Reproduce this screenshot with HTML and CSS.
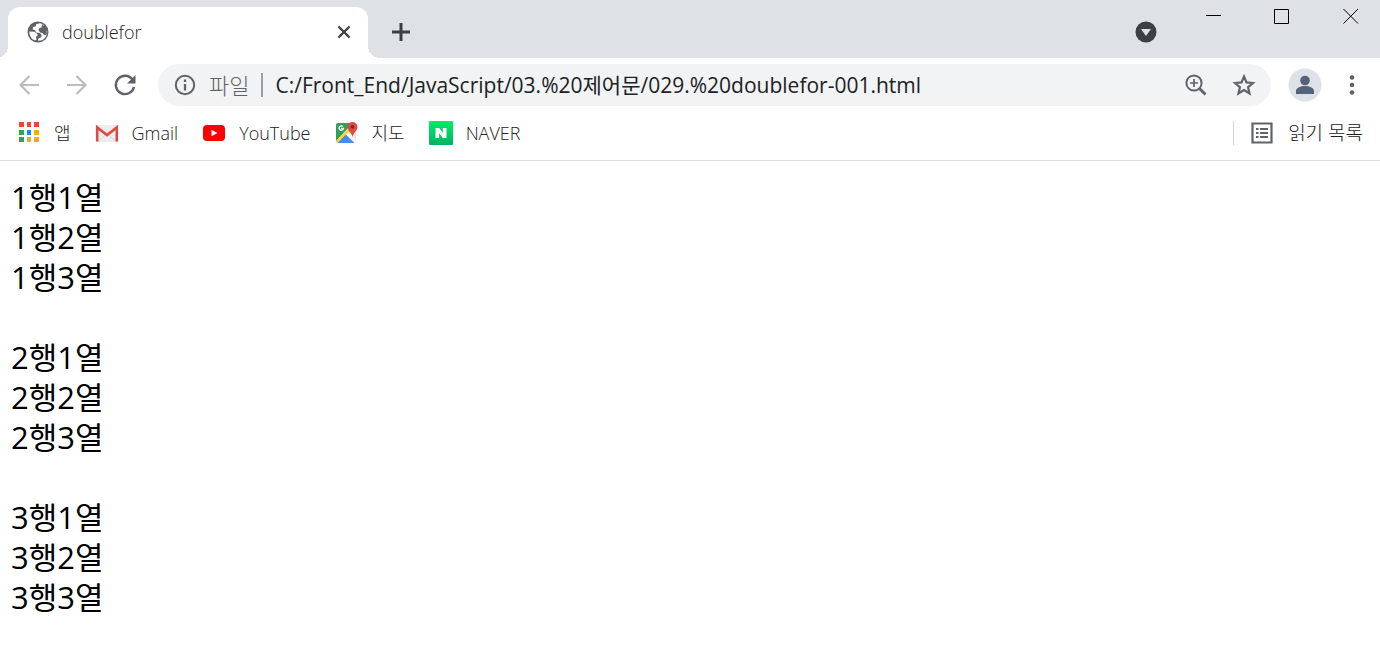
FILE: index.html
```html
<!DOCTYPE html>
<html lang="ko">
<head>
    <meta charset="UTF-8">
    <meta name="viewport" content="width=device-width, initial-scale=1.0">
    <title>doublefor</title>
    <link rel="stylesheet" href="styles.css">
</head>
<body>
    <header class="browser">
        <div class="tab-strip">
            <div class="tab">
                <svg width="24" height="24" viewBox="0 0 24 24">
                    <circle cx="12" cy="12" r="10.500" fill="#5f6368"/>
                    <path fill="#fff" d="M13.500 3.300c2 .3 3.500 1 4.800 2.200l-1.500 1.300-.3 2.200 1.800 1.500 2.900.5c.2 4-1.800 7.500-5.200 9.200l-4 .6.500-2.600 2.500-.8.700-2.500-1.900-2-3.800-.4-1-2.500-2.300-.5.300-2.400 2.600-.6.600-2.200z"/>
                    <path fill="#5f6368" d="M16 4l4 4 1 6-2.500 1.500-2-2.500-2.500-.5-1.500-2.500 1-2 2-.5z"/>
                    <path fill="#fff" d="M3.300 11.500l5 .3 2.500 1.700 1 1.800-1.800 1.700.5 3-2 .3c-3-1.500-5.200-4.600-5.200-8.800z"/>
                </svg>
                <span class="tab-title">doublefor</span>
                <button class="icon-btn" type="button" aria-label="탭 닫기">
                    <svg width="24" height="24" viewBox="0 0 24 24"><path d="M6.500 6.500l11 11M17.500 6.500l-11 11" stroke="#3c4043" stroke-width="2.400"/></svg>
                </button>
            </div>
            <button class="icon-btn new-tab" type="button" aria-label="새 탭">
                <svg width="24" height="24" viewBox="0 0 24 24"><path d="M12 3v18M3 12h18" stroke="#3c4043" stroke-width="3"/></svg>
            </button>
            <button class="icon-btn tab-search" type="button" aria-label="탭 검색">
                <svg width="24" height="24" viewBox="0 0 24 24"><circle cx="12" cy="12" r="10.500" fill="#3c4043"/><path d="M7 9h10l-5 7z" fill="#dee1e6"/></svg>
            </button>
            <div class="window-buttons">
                <button class="icon-btn" type="button" aria-label="최소화">
                    <svg width="16" height="16" viewBox="0 0 16 16"><path d="M1 7.500h15" stroke="#000"/></svg>
                </button>
                <button class="icon-btn" type="button" aria-label="최대화">
                    <svg width="16" height="16" viewBox="0 0 16 16"><path d="M.5 1.500h14v14H.5z" fill="none" stroke="#000"/></svg>
                </button>
                <button class="icon-btn" type="button" aria-label="닫기">
                    <svg width="16" height="16" viewBox="0 0 16 16"><path d="M.5 1l14.500 14.500M15 1L.5 15.500" stroke="#000"/></svg>
                </button>
            </div>
        </div>

        <div class="toolbar">
            <button class="icon-btn" type="button" aria-label="뒤로">
                <svg width="24" height="24" viewBox="0 0 24 24"><path d="M22 12H4M12.500 3L3.500 12l9 9" fill="none" stroke="#babcbe" stroke-width="2.200"/></svg>
            </button>
            <button class="icon-btn" type="button" aria-label="앞으로">
                <svg width="24" height="24" viewBox="0 0 24 24"><path d="M2 12h18M11.500 3l9 9-9 9" fill="none" stroke="#babcbe" stroke-width="2.200"/></svg>
            </button>
            <button class="icon-btn" type="button" aria-label="새로고침">
                <svg width="24" height="24" viewBox="0 0 24 24"><path d="M19.500 6.500A9.200 9.200 0 1 0 21 14" fill="none" stroke="#5f6368" stroke-width="2.400"/><path d="M22.500 2v8.500H14z" fill="#5f6368"/></svg>
            </button>
            <div class="omnibox">
                <svg width="24" height="24" viewBox="0 0 24 24"><circle cx="12" cy="12" r="9.200" fill="none" stroke="#5f6368" stroke-width="2"/><path d="M12 6.500v2.500M12 11v6.500" stroke="#5f6368" stroke-width="2.300"/></svg>
                <label class="scheme" for="address">파일</label>
                <input class="address" id="address" type="text" spellcheck="false" value="C:/Front_End/JavaScript/03.%20제어문/029.%20doublefor-001.html">
                <button class="icon-btn" type="button" aria-label="확대/축소">
                    <svg width="24" height="24" viewBox="0 0 24 24"><circle cx="10" cy="10" r="7.600" fill="none" stroke="#5f6368" stroke-width="2"/><path d="M6 10h8M10 6v8" stroke="#5f6368" stroke-width="1.700"/><path d="M15 15l6.500 6.500" stroke="#5f6368" stroke-width="2.800"/></svg>
                </button>
                <button class="icon-btn" type="button" aria-label="북마크에 추가">
                    <svg width="24" height="24" viewBox="0 0 24 24"><path d="M12 3.500l2.500 5.900 6.400.6-4.800 4.200 1.400 6.200-5.500-3.300-5.500 3.300 1.400-6.200L3.100 10l6.400-.6z" fill="none" stroke="#5f6368" stroke-width="2.200"/></svg>
                </button>
            </div>
            <button class="icon-btn profile" type="button" aria-label="프로필">
                <svg width="34" height="34" viewBox="0 0 34 34"><circle cx="17" cy="17" r="16.500" fill="#dee1e6"/><circle cx="17" cy="12.500" r="4.800" fill="#56617a"/><path d="M8 26v-3c0-3.500 5-5 9-5s9 1.500 9 5v3z" fill="#56617a"/></svg>
            </button>
            <button class="icon-btn" type="button" aria-label="메뉴">
                <svg width="24" height="24" viewBox="0 0 24 24" fill="#5f6368"><circle cx="12" cy="4.500" r="2.300"/><circle cx="12" cy="12" r="2.300"/><circle cx="12" cy="19.500" r="2.300"/></svg>
            </button>
        </div>

        <nav class="bookmarks">
            <a class="bookmark" href="#">
                <svg width="24" height="24" viewBox="0 0 24 24">
                    <path fill="#f44336" d="M2 1h5v5H2zM10 1h4v5h-4zM17 1h5v5h-5z"/>
                    <path fill="#34a058" d="M2 9h5v5H2zM2 16h5v5H2z"/>
                    <path fill="#1e88f0" d="M10 9h4v5h-4z"/>
                    <path fill="#fbab05" d="M17 9h5v5h-5zM10 16h4v5h-4zM17 16h5v5h-5z"/>
                </svg>
                <span>앱</span>
            </a>
            <a class="bookmark" href="#">
                <svg width="24" height="24" viewBox="0 0 24 24">
                    <rect x="1" y="4" width="22" height="17" rx="1" fill="#ececec"/>
                    <path d="M4 20l8-8 8 8" fill="none" stroke="#d6d6d6"/>
                    <path d="M2.200 20.500V6.500L12 14l9.800-7.500v14" fill="none" stroke="#db4b3f" stroke-width="2.600"/>
                </svg>
                <span>Gmail</span>
            </a>
            <a class="bookmark" href="#">
                <svg width="24" height="24" viewBox="0 0 24 24"><rect x="1" y="4" width="22" height="16" rx="4" fill="#f00"/><path d="M9.500 8.800l6 3.200-6 3.200z" fill="#fff"/></svg>
                <span>YouTube</span>
            </a>
            <a class="bookmark" href="#">
                <svg width="24" height="24" viewBox="0 0 24 24">
                    <rect x="1" y="2" width="20" height="20" rx="2" fill="#e4e4e4"/>
                    <path d="M3 2h15L1 20V4a2 2 0 0 1 2-2z" fill="#2f9e5b"/>
                    <path d="M1 20L16 4l4 5L4 22H2z" fill="#fdd33f"/>
                    <path d="M2.500 22L11 13.500l9 8.500z" fill="#4a8af4"/>
                    <path d="M11 13.500l3-3 7 8V22h-1.500z" fill="#f5f5f5"/>
                    <path d="M7.800 5.500a2.200 2.200 0 1 0 .6 2H6.200" fill="none" stroke="#fff" stroke-width="1.300"/>
                    <path d="M17.500 1a5 5 0 0 1 5 5c0 4-4 5-5 10-1-5-5-6-5-10a5 5 0 0 1 5-5z" fill="#df4b3e"/>
                    <circle cx="17.500" cy="5.800" r="1.900" fill="#7d2821"/>
                </svg>
                <span>지도</span>
            </a>
            <a class="bookmark" href="#">
                <svg width="24" height="24" viewBox="0 0 24 24">
                    <defs><linearGradient id="naver" x2="0" y2="1"><stop stop-color="#00ee66"/><stop offset="1" stop-color="#05b064"/></linearGradient></defs>
                    <rect width="24" height="24" rx="1" fill="url(#naver)"/>
                    <path d="M6.500 7h3.800l3.500 5V7h3.700v10h-3.800l-3.500-5v5H6.500z" fill="#fff"/>
                </svg>
                <span>NAVER</span>
            </a>
            <a class="bookmark reading-list" href="#">
                <svg width="24" height="24" viewBox="0 0 24 24"><path d="M2.500 2.500h19v19h-19z" fill="none" stroke="#5f6368" stroke-width="2.200"/><path d="M6 8h2.500M6 12h2.500M6 16h2.500M10 8h8M10 12h8M10 16h8" stroke="#5f6368" stroke-width="2"/></svg>
                <span>읽기 목록</span>
            </a>
        </nav>
    </header>

    <main class="content">
        1행1열<br>
        1행2열<br>
        1행3열<br>
        <br>
        2행1열<br>
        2행2열<br>
        2행3열<br>
        <br>
        3행1열<br>
        3행2열<br>
        3행3열<br>
    </main>
</body>
</html>
```
FILE: styles.css
```css
* {
    box-sizing: border-box;
}

body {
    margin: 0;
    background: #fff;
    color: #000;
    font-family: "Open Sans", "Noto Sans CJK KR", sans-serif;
}

svg {
    display: block;
    flex: none;
}

.icon-btn {
    flex: none;
    padding: 0;
    border: none;
    background: none;
}

/* tab strip */
.tab-strip {
    display: flex;
    align-items: center;
    height: 58px;
    padding-left: 8px;
    background: #dee1e6;
}

.tab {
    position: relative;
    display: flex;
    align-items: center;
    align-self: flex-end;
    gap: 12px;
    width: 360px;
    height: 51px;
    padding: 0 12px 2px 18px;
    border-radius: 12px 12px 0 0;
    background: #fff;
}

/* curved feet of the active tab */
.tab::before,
.tab::after {
    content: "";
    position: absolute;
    bottom: 0;
    width: 12px;
    height: 12px;
}

.tab::before {
    right: 100%;
    background: radial-gradient(circle at 0 0, transparent 12px, #fff 12px);
}

.tab::after {
    left: 100%;
    background: radial-gradient(circle at 100% 0, transparent 12px, #fff 12px);
}

.tab-title {
    flex: 1;
    color: #202124;
    font-size: 18px;
    font-weight: 300;
    line-height: 24px;
}

.new-tab {
    margin: 6px 0 0 21px;
}

.tab-search {
    margin: 6px 0 0 auto;
}

.window-buttons {
    display: flex;
    align-self: flex-start;
    gap: 53px;
    margin-left: 47px;
    padding: 8px 21px 0 0;
}

/* toolbar */
.toolbar {
    display: flex;
    align-items: center;
    gap: 24px;
    padding: 6px 16px 6px 17px;
}

.omnibox {
    display: flex;
    flex: 1;
    align-items: center;
    gap: 24px;
    height: 42px;
    margin-left: -3px;
    padding: 0 15px;
    border-radius: 21px;
    background: #f1f3f4;
}

.scheme {
    margin-left: -12px;
    padding-right: 12px;
    border-right: 2px solid #9aa0a6;
    color: #5f6368;
    font-size: 22px;
    font-weight: 300;
    line-height: 24px;
}

.address {
    flex: 1;
    min-width: 0;
    margin-left: -12px;
    padding: 0;
    border: none;
    outline: none;
    background: none;
    color: #202124;
    font: 21px/30px "Open Sans", "Noto Sans CJK KR", sans-serif;
}

.profile {
    margin: 0 -6px 0 -7px;
}

/* bookmarks bar */
.bookmarks {
    display: flex;
    align-items: center;
    gap: 24px;
    height: 49px;
    padding: 0 17px 7px;
    border-bottom: 1px solid #dadce0;
}

.bookmark {
    display: flex;
    align-items: center;
    gap: 13px;
    color: #202124;
    font-size: 18px;
    font-weight: 300;
    line-height: 24px;
    text-decoration: none;
}

.reading-list {
    gap: 14px;
    margin-left: auto;
    padding-left: 16px;
    border-left: 1px solid #cfd1d5;
    font-size: 19px;
}

/* page output */
.content {
    padding: 16px 11px;
    font-size: 31px;
    line-height: 40px;
}
```
